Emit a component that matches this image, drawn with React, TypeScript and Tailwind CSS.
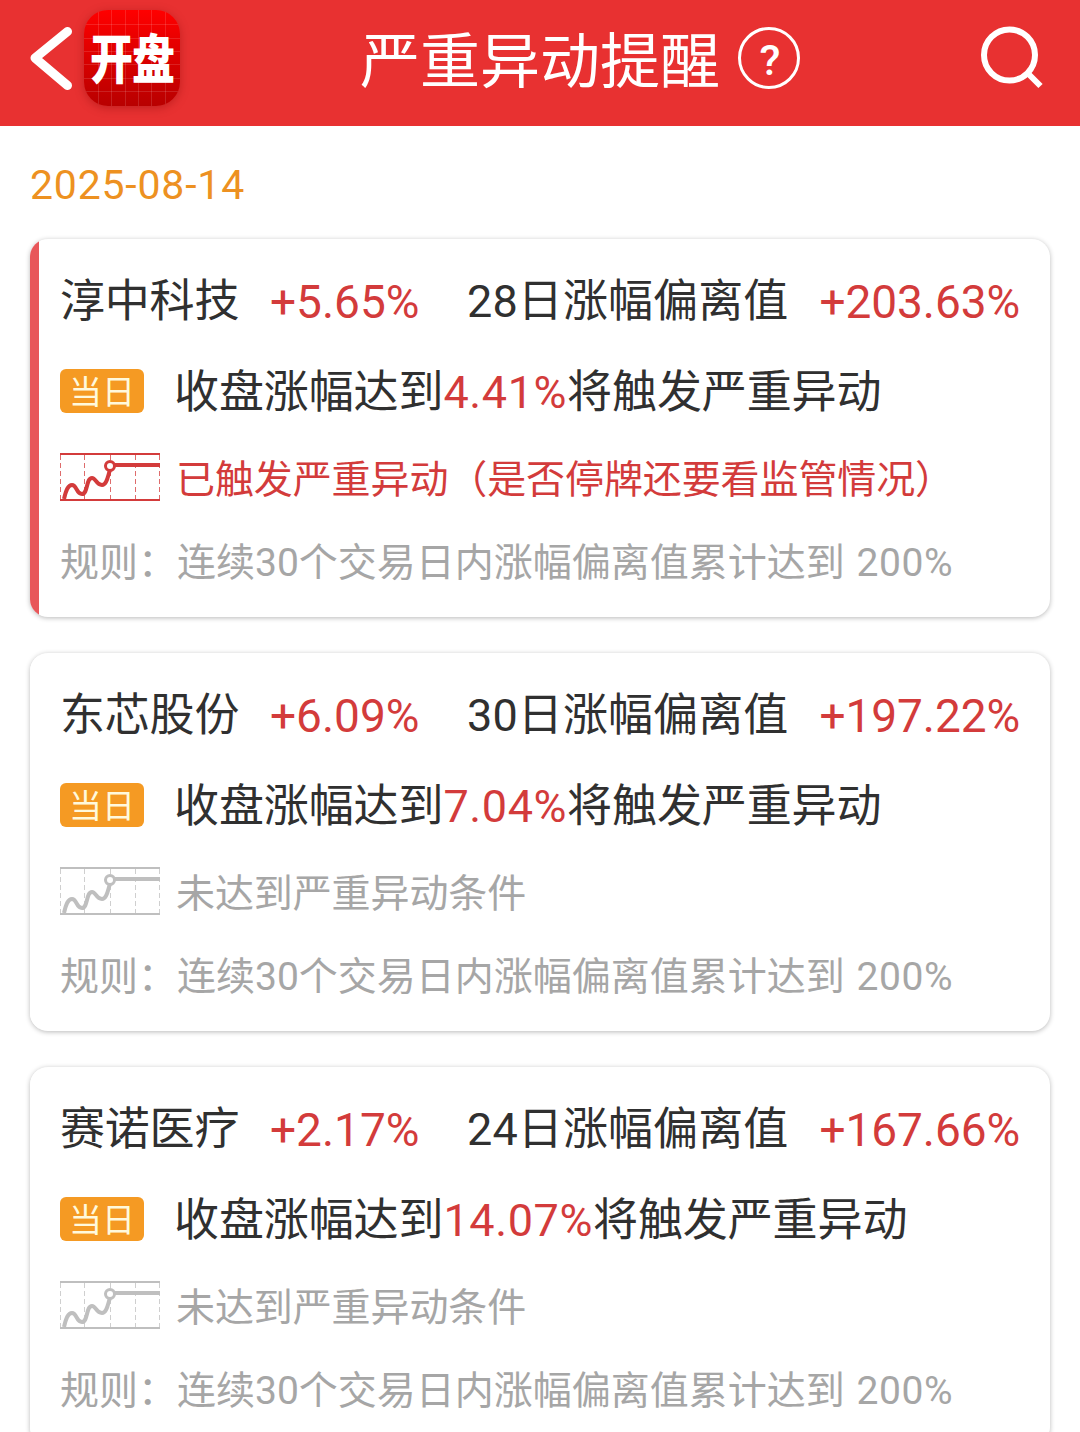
type Stock = {
  name: string;
  change: string;
  days: number;
  deviation: string;
  trigger: string;
  triggered: boolean;
};

const stocks: Stock[] = [
  { name: "淳中科技", change: "+5.65%", days: 28, deviation: "+203.63%", trigger: "4.41%", triggered: true },
  { name: "东芯股份", change: "+6.09%", days: 30, deviation: "+197.22%", trigger: "7.04%", triggered: false },
  { name: "赛诺医疗", change: "+2.17%", days: 24, deviation: "+167.66%", trigger: "14.07%", triggered: false },
];

function TrendIcon({ className }: { className: string }) {
  return (
    <svg viewBox="0 0 100 48" className={`h-12 w-[100px] shrink-0 ${className}`} fill="none" stroke="currentColor">
      <path d="M0 1h100M0 47h100" strokeWidth="2" />
      <path d="M.5 2v44M24.5 2v44M50.5 2v44M75.5 2v44M99.5 2v44" strokeWidth="1" strokeDasharray="5 3" opacity=".75" />
      <path d="M4 46C6 37 8 32 12 32C17 32 16 41 22 41C28 41 26 25 32 25C36 25 36 32 42 32C47 32 48 22 50 17" strokeWidth="4" />
      <path d="M55 12h45" strokeWidth="4" />
      <circle cx="50" cy="13" r="4.5" strokeWidth="3" fill="white" />
    </svg>
  );
}

function Header() {
  return (
    <header className="grid h-[126px] grid-cols-[1fr_auto_1fr] items-start bg-[#e83131] text-white">
      <div className="flex pt-2.5 pl-[30px]">
        <svg viewBox="0 0 44 66" className="mt-4 h-[66px] w-11" fill="none" stroke="currentColor" strokeWidth="9" strokeLinecap="round" strokeLinejoin="round">
          <path d="M37.5 5.5L5 32L37.5 59.5" />
        </svg>
        <div className="relative ml-2.5 flex size-24 items-center justify-center overflow-hidden rounded-[24px] bg-linear-to-b from-[#ff0000] to-[#b80000] shadow-[0_2px_10px_rgba(120,0,0,0.35)]">
          <svg viewBox="0 0 96 96" className="absolute inset-0" stroke="white" strokeOpacity=".13">
            <path d="M14.5 0v96M41.5 0v96M54.5 0v96M67.5 0v96M81.5 0v96M27.5 0v96M0 14.5h96M0 28.5h96M0 41.5h96M0 54.5h96M0 68.5h96M0 81.5h96" />
          </svg>
          <span className="relative top-0.5 scale-y-[1.24] text-[43px] leading-[96px] font-black tracking-[-1px]">开盘</span>
        </div>
      </div>
      <h1 className="pt-[31px] text-[60px] leading-[64px]">严重异动提醒</h1>
      <div className="flex justify-between pr-9 pl-[18px]">
        <div className="mt-[27px] flex size-[62px] items-center justify-center rounded-full border-[3px] border-white pt-1 pl-0.5 font-[Roboto] text-[43px] leading-none font-medium">
          ?
        </div>
        <svg viewBox="0 0 64 64" className="mt-[26px] size-16" fill="none" stroke="currentColor">
          <circle cx="29.5" cy="29" r="25.5" strokeWidth="6" />
          <path d="M47.5 47L60.5 60" strokeWidth="6" />
        </svg>
      </div>
    </header>
  );
}

function StockCard({ stock }: { stock: Stock }) {
  return (
    <article className="flex h-[378px] overflow-hidden rounded-[18px] bg-white shadow-[0_1px_5px_rgba(0,0,0,0.28)]">
      <div className={`w-[9px] shrink-0 ${stock.triggered ? "bg-[#e8575a]" : "bg-white"}`} />
      <div className="flex-1 pt-[33px] pr-[30px] pl-[21px]">
        <div className="flex h-[60px] items-center text-[45px] leading-[60px] text-[#303030]">
          <span className="w-[210px] tracking-[-0.2px]">{stock.name}</span>
          <span className="w-[197px] text-[46px] text-[#d33b3b]">{stock.change}</span>
          <span className="tracking-[0.1px]">{stock.days}日涨幅偏离值</span>
          <span className="ml-auto text-[46px] tracking-[-0.1px] text-[#d33b3b]">{stock.deviation}</span>
        </div>
        <div className="mt-[27px] flex h-[60px] items-center">
          <span className="mt-1 h-11 w-[84px] rounded-md bg-[#f59a23] pt-0.5 text-center text-[33px] leading-11 text-[#fff9dc]">当日</span>
          <p className="ml-[30px] pt-[7px] text-[45px] leading-[60px] tracking-[-0.1px] text-[#303030]">
            收盘涨幅达到<span className="tracking-[0.6px] text-[#d33b3b]">{stock.trigger}</span>将触发严重异动
          </p>
        </div>
        <div className="mt-[34px] flex h-12 items-center">
          <TrendIcon className={stock.triggered ? "text-[#d33b3b]" : "text-[#bfbfbf]"} />
          <p className={`ml-4 pt-1.5 text-[39px] leading-[48px] tracking-[-0.1px] whitespace-nowrap ${stock.triggered ? "text-[#d33b3b]" : "text-[#a6a6a6]"}`}>
            {stock.triggered ? "已触发严重异动（是否停牌还要看监管情况）" : "未达到严重异动条件"}
          </p>
        </div>
        <p className="mt-[38px] text-[39px] leading-[48px] whitespace-nowrap text-[#a6a6a6]">
          规则：连续30个交易日内涨幅偏离值累计达到 <span className="ml-0.5 tracking-[0.6px]">200%</span>
        </p>
      </div>
    </article>
  );
}

export default function App() {
  return (
    <div lang="zh-CN" className="h-[1432px] w-[1080px] overflow-hidden bg-white font-[Roboto,'Noto_Sans_CJK_SC',sans-serif]">
      <Header />
      <main className="px-[30px]">
        <div className="pt-[31px] text-[41px] leading-[56px] tracking-[0.8px] text-[#ed9121]">2025-08-14</div>
        <div className="mt-[26px] flex flex-col gap-9">
          {stocks.map((stock) => (
            <StockCard key={stock.name} stock={stock} />
          ))}
        </div>
      </main>
    </div>
  );
}
